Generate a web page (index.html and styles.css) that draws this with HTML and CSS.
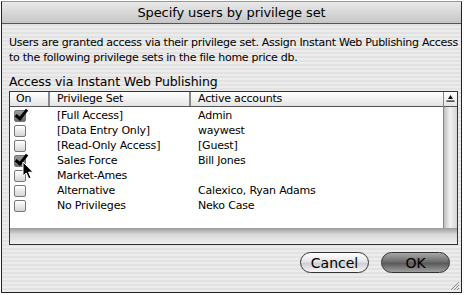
FILE: index.html
```html
<!DOCTYPE html>
<html lang="en">
<head>
    <meta charset="UTF-8">
    <title>Specify users by privilege set</title>
    <link rel="stylesheet" href="styles.css">
</head>
<body>
    <div class="dialog">
        <div class="titlebar">Specify users by privilege set</div>

        <div class="content">
            <p class="intro">Users are granted access via their privilege set. Assign Instant Web Publishing Access<br>to the following privilege sets in the file home price db.</p>

            <div class="section-label">Access via Instant Web Publishing</div>

            <div class="list">
                <div class="list-main">
                    <div class="row head">
                        <div class="cell on">On</div>
                        <div class="cell set">Privilege Set</div>
                        <div class="cell accounts">Active accounts</div>
                    </div>
                    <div class="rows">
                        <div class="row"><div class="cell on"><span class="check checked"></span></div><div class="cell set">[Full Access]</div><div class="cell accounts">Admin</div></div>
                        <div class="row"><div class="cell on"><span class="check"></span></div><div class="cell set">[Data Entry Only]</div><div class="cell accounts">waywest</div></div>
                        <div class="row"><div class="cell on"><span class="check"></span></div><div class="cell set">[Read-Only Access]</div><div class="cell accounts">[Guest]</div></div>
                        <div class="row"><div class="cell on"><span class="check checked"></span></div><div class="cell set">Sales Force</div><div class="cell accounts">Bill Jones</div></div>
                        <div class="row"><div class="cell on"><span class="check"></span></div><div class="cell set">Market-Ames</div><div class="cell accounts"></div></div>
                        <div class="row"><div class="cell on"><span class="check"></span></div><div class="cell set">Alternative</div><div class="cell accounts">Calexico, Ryan Adams</div></div>
                        <div class="row"><div class="cell on"><span class="check"></span></div><div class="cell set">No Privileges</div><div class="cell accounts">Neko Case</div></div>
                    </div>
                </div>
                <div class="scroll-col">
                    <div class="corner">
                        <svg width="9" height="8" viewBox="0 0 9 8"><path d="M4.5 0 L7 4 L2 4 Z" fill="#111"/><rect x="0.5" y="5.5" width="8" height="1.2" fill="#111"/></svg>
                    </div>
                    <div class="track"></div>
                </div>
                <div class="list-foot"></div>

                <svg class="cursor" width="13" height="19" viewBox="0 0 13 19"><path d="M1 1 L1 15 L4.2 12 L6.8 17.8 L9 16.8 L6.5 11.2 L11 11.2 Z" fill="#000" stroke="#fff" stroke-width="1"/></svg>
            </div>

            <div class="buttons">
                <button class="btn">Cancel</button>
                <button class="btn default">OK</button>
            </div>
        </div>

        <svg class="grip" width="11" height="11" viewBox="0 0 11 11"><path d="M10 2 L2 10 M10 5 L5 10 M10 8 L8 10" stroke="#888" stroke-width="1"/></svg>
    </div>
</body>
</html>
```

FILE: styles.css
```css
body {
    margin: 0;
    background: #ffffff;
    font-family: "DejaVu Sans", Verdana, sans-serif;
    color: #000;
}
.dialog {
    position: relative;
    width: 461px;
    height: 292px;
    margin: 1px 0 0 1px;
    border: 1px solid #222;
    border-top-color: #999;
    box-sizing: border-box;
    background: repeating-linear-gradient(to bottom, #ececec 0px, #ececec 2px, #e2e2e2 2px, #e2e2e2 4px);
    overflow: hidden;
}
.titlebar {
    height: 21px;
    line-height: 21px;
    text-align: center;
    font-size: 13px;
    letter-spacing: -0.1px;
    background: linear-gradient(to bottom, #e9e9e9, #c6c6c6);
    border-bottom: 1px solid #555;
}
.content {
    padding: 11px 0 0 7px;
}
.intro {
    margin: 0;
    font-size: 11px;
    line-height: 15px;
    letter-spacing: -0.28px;
    white-space: nowrap;
}
.section-label {
    margin-top: 10px;
    font-size: 12.5px;
    line-height: 14px;
    letter-spacing: -0.1px;
}
.list {
    position: relative;
    margin-top: 2px;
    width: 449px;
    height: 154px;
    box-sizing: border-box;
    border: 1px solid #333;
    display: grid;
    grid-template-columns: 1fr 14px;
    grid-template-rows: 1fr 16px;
    background: #fff;
}
.list-main {
    grid-column: 1;
    grid-row: 1;
}
.row {
    display: flex;
    height: 15px;
    font-size: 11px;
    line-height: 15px;
    letter-spacing: -0.2px;
}
.row.head {
    height: 14px;
    line-height: 14px;
    background: linear-gradient(to bottom, #ffffff, #e4e4e4);
    border-bottom: 1px solid #555;
}
.rows {
    padding-top: 1px;
}
.cell {
    box-sizing: border-box;
    padding-left: 7px;
    white-space: nowrap;
}
.cell.on {
    width: 40px;
    padding-left: 4px;
    display: flex;
    align-items: center;
}
.head .cell.on {
    display: block;
    padding-left: 6px;
}
.cell.set {
    width: 141px;
}
.head .cell.on,
.head .cell.set {
    border-right: 2px solid #888;
}
.check {
    display: inline-block;
    width: 12px;
    height: 12px;
    box-sizing: border-box;
    border: 1px solid #777;
    border-radius: 2px;
    background: linear-gradient(to bottom, #ffffff, #d4d4d4);
    position: relative;
}
.check.checked {
    background: linear-gradient(to bottom, #9a9a9a, #6c6c6c);
}
.check.checked::after {
    content: "";
    position: absolute;
    left: 3px;
    top: -4px;
    width: 4px;
    height: 10px;
    border-right: 3px solid #000;
    border-bottom: 3px solid #000;
    transform: rotate(38deg);
}
.scroll-col {
    grid-column: 2;
    grid-row: 1;
    display: flex;
    flex-direction: column;
    border-left: 1px solid #888;
}
.corner {
    height: 14px;
    border-bottom: 1px solid #555;
    background: linear-gradient(to bottom, #ffffff, #e4e4e4);
    display: flex;
    align-items: center;
    justify-content: center;
}
.track {
    flex: 1;
    background: linear-gradient(to right, #bdbdbd, #f2f2f2 45%, #d6d6d6);
}
.list-foot {
    grid-column: 1 / span 2;
    grid-row: 2;
    background: linear-gradient(to bottom, #9a9a9a, #d8d8d8 40%, #efefef);
}
.cursor {
    position: absolute;
    left: 12px;
    top: 69px;
}
.buttons {
    display: flex;
    justify-content: flex-end;
    gap: 12px;
    margin-top: 7px;
    padding-right: 11px;
}
.btn {
    width: 69px;
    height: 21px;
    border-radius: 11px;
    border: 1px solid #333;
    font-family: "DejaVu Sans", Verdana, sans-serif;
    font-size: 14px;
    color: #000;
    padding: 0;
    background: linear-gradient(to bottom, #ffffff, #e6e6e6 45%, #d0d0d0 55%, #f6f6f6);
}
.btn.default {
    background: linear-gradient(to bottom, #a8a8a8, #6e6e6e 45%, #5a5a5a 55%, #a0a0a0);
}
.grip {
    position: absolute;
    right: 1px;
    bottom: 1px;
}
```
